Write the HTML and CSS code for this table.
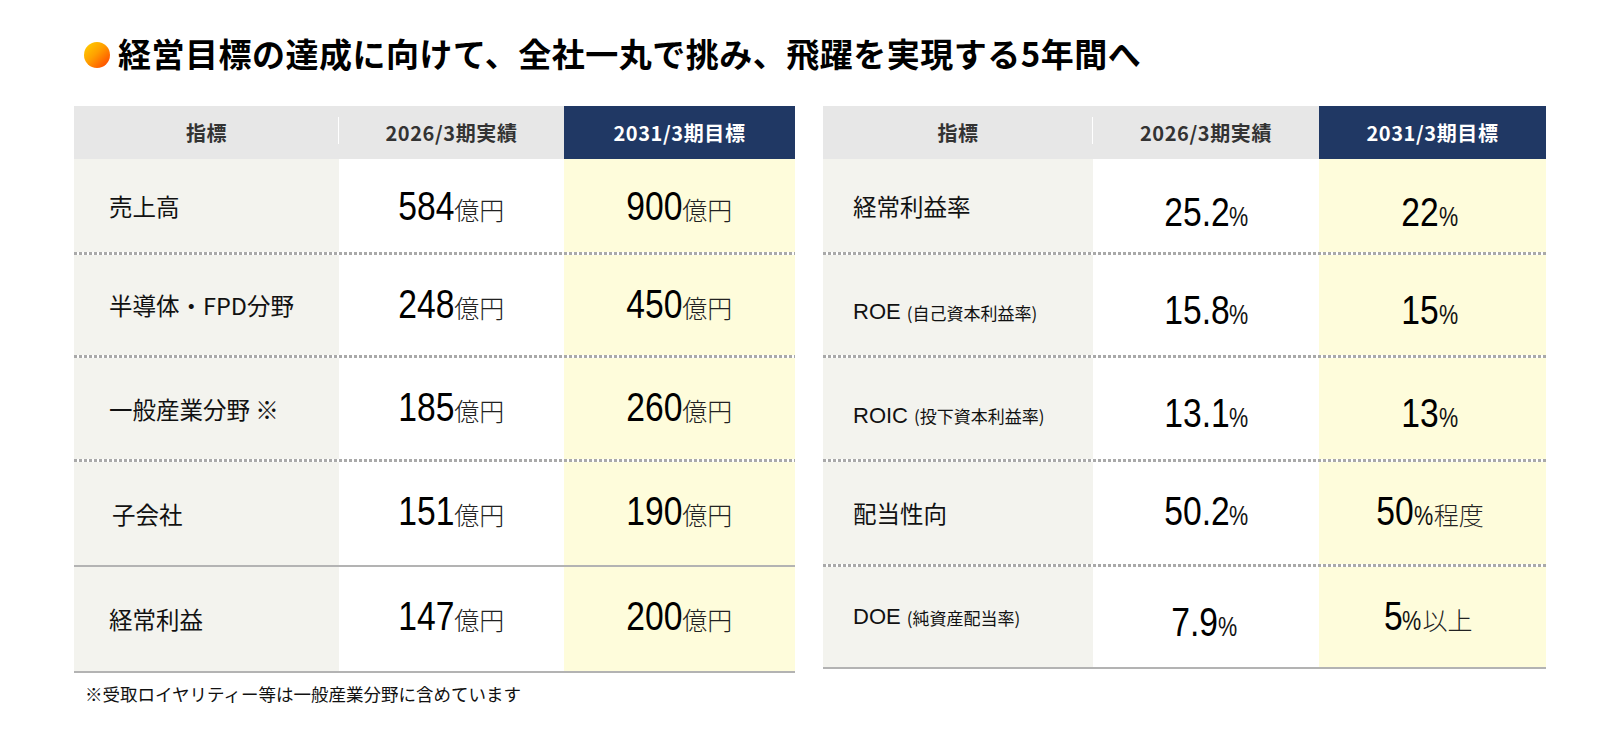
FILE: index.html
```html
<!DOCTYPE html>
<html lang="ja">
<head>
<meta charset="utf-8">
<title>経営目標</title>
<link rel="stylesheet" href="styles.css">
</head>
<body>
<div class="page">
  <h1 class="title"><span class="dot"></span>経営目標の達成に向けて、全社一丸で挑み、飛躍を実現する5年間へ</h1>
  <div class="tables">
    <div class="tbl tbl-left">
      <div class="row head">
        <div class="c h first">指標</div>
        <div class="c h">2026/3期実績</div>
        <div class="c h goal">2031/3期目標</div>
      </div>
      <div class="row dotted">
        <div class="c label">売上高</div>
        <div class="c val"><span class="num">584</span><span class="unit">億円</span></div>
        <div class="c val tgt"><span class="num">900</span><span class="unit">億円</span></div>
      </div>
      <div class="row dotted">
        <div class="c label">半導体・FPD分野</div>
        <div class="c val"><span class="num">248</span><span class="unit">億円</span></div>
        <div class="c val tgt"><span class="num">450</span><span class="unit">億円</span></div>
      </div>
      <div class="row dotted">
        <div class="c label">一般産業分野 ※</div>
        <div class="c val"><span class="num">185</span><span class="unit">億円</span></div>
        <div class="c val tgt"><span class="num">260</span><span class="unit">億円</span></div>
      </div>
      <div class="row solid">
        <div class="c label indent">子会社</div>
        <div class="c val"><span class="num">151</span><span class="unit">億円</span></div>
        <div class="c val tgt"><span class="num">190</span><span class="unit">億円</span></div>
      </div>
      <div class="row solid">
        <div class="c label">経常利益</div>
        <div class="c val"><span class="num">147</span><span class="unit">億円</span></div>
        <div class="c val tgt"><span class="num">200</span><span class="unit">億円</span></div>
      </div>
    </div>

    <div class="tbl tbl-right">
      <div class="row head">
        <div class="c h first">指標</div>
        <div class="c h">2026/3期実績</div>
        <div class="c h goal">2031/3期目標</div>
      </div>
      <div class="row dotted">
        <div class="c label">経常利益率</div>
        <div class="c val low"><span class="num">25.2</span><span class="pct">%</span></div>
        <div class="c val low tgt"><span class="num">22</span><span class="pct">%</span></div>
      </div>
      <div class="row dotted">
        <div class="c label drop"><span class="en">ROE</span><span class="paren">(自己資本利益率)</span></div>
        <div class="c val low"><span class="num">15.8</span><span class="pct">%</span></div>
        <div class="c val low tgt"><span class="num">15</span><span class="pct">%</span></div>
      </div>
      <div class="row dotted">
        <div class="c label drop"><span class="en">ROIC</span><span class="paren">(投下資本利益率)</span></div>
        <div class="c val low"><span class="num">13.1</span><span class="pct">%</span></div>
        <div class="c val low tgt"><span class="num">13</span><span class="pct">%</span></div>
      </div>
      <div class="row dotted">
        <div class="c label">配当性向</div>
        <div class="c val"><span class="num">50.2</span><span class="pct">%</span></div>
        <div class="c val tgt"><span class="num">50</span><span class="pct">%</span><span class="unit">程度</span></div>
      </div>
      <div class="row solid">
        <div class="c label"><span class="en">DOE</span><span class="paren">(純資産配当率)</span></div>
        <div class="c val low"><span class="num">7.9</span><span class="pct">%</span></div>
        <div class="c val tgt"><span class="num">5</span><span class="pct">%</span><span class="unit">以上</span></div>
      </div>
    </div>
  </div>
  <p class="note">※受取ロイヤリティー等は一般産業分野に含めています</p>
</div>
</body>
</html>
```

FILE: styles.css
```css
* { box-sizing: border-box; }

body {
  margin: 0;
  background: #ffffff;
  font-family: "Noto Sans CJK JP", "Noto Sans", sans-serif;
  color: #111111;
}

.page {
  padding: 33px 0 0 74px;
}

.title {
  margin: 0 0 0 10px;
  height: 40px;
  display: flex;
  align-items: center;
  gap: 8px;
  font-size: 33px;
  line-height: 40px;
  font-weight: 700;
  color: #000000;
  letter-spacing: 0.5px;
}

.dot {
  flex: none;
  width: 26px;
  height: 26px;
  margin-top: 4px;
  border-radius: 50%;
  background: linear-gradient(135deg, #ffd400 0%, #ffa000 45%, #ff3a00 100%);
}

.tables {
  display: flex;
  align-items: flex-start;
  gap: 28px;
  margin-top: 33px;
}

.tbl-left { --cols: 265px 225px 231px; }
.tbl-right { --cols: 270px 226px 227px; }

.row {
  display: grid;
  grid-template-columns: var(--cols);
}

.head {
  height: 53px;
}

.c.h {
  position: relative;
  display: flex;
  align-items: center;
  justify-content: center;
  background: #e7e7e7;
  font-size: 20px;
  font-weight: 700;
  letter-spacing: 0.6px;
  color: #333333;
}

.c.h.first::after {
  content: "";
  position: absolute;
  right: 0;
  top: 11px;
  width: 1px;
  height: 27px;
  background: #ffffff;
}

.c.h.goal {
  background: #203864;
  color: #ffffff;
}

.row.dotted {
  padding-bottom: 3px;
  background: repeating-linear-gradient(to right, #a9a9a9 0 3px, #ffffff 3px 5px) left bottom / 100% 3px no-repeat;
}

.row.solid {
  border-bottom: 2px solid #b3b3b3;
}

.row:nth-child(2) { height: 96px; }
.row:nth-child(3) { height: 103px; }
.row:nth-child(4) { height: 104px; }
.row:nth-child(5) { height: 105px; }
.tbl-left .row:nth-child(6) { height: 106px; }
.tbl-right .row:nth-child(6) { height: 102px; }

.c.label {
  display: flex;
  align-items: center;
  padding: 0 0 0 35px;
  background: #f3f3ee;
  font-size: 23.5px;
  color: #111111;
}

.tbl-right .c.label {
  padding: 0 0 0 30px;
}

.tbl-right .c.label.drop {
  padding-top: 14px;
}

.c.label.indent {
  padding-left: 38px;
}

.en {
  font-family: "Liberation Sans", "Noto Sans", sans-serif;
  font-size: 22px;
}

.paren {
  font-size: 17px;
  margin-left: 6px;
}

.c.val {
  display: flex;
  align-items: baseline;
  justify-content: center;
  padding-top: 26px;
  background: #ffffff;
  white-space: nowrap;
}

.row:nth-child(2) .c.val {
  padding-top: 24px;
}

.c.val.low {
  padding-top: 32px;
}

.row:nth-child(2) .c.val.low {
  padding-top: 30px;
}

.c.val.tgt {
  background: #fefcdb;
}

.num {
  display: inline-block;
  margin-left: -13px;
  font-family: "Liberation Sans", sans-serif;
  font-size: 41px;
  line-height: 46px;
  color: #000000;
  transform: scaleX(0.82);
  transform-origin: 100% 50%;
}

.pct {
  display: inline-block;
  margin-right: -4px;
  font-family: "Liberation Sans", sans-serif;
  font-size: 27px;
  color: #111111;
  transform: scaleX(0.8);
  transform-origin: 0 50%;
}

.unit {
  font-size: 25px;
  font-weight: 300;
  color: #222222;
}

.note {
  margin: 9px 0 0 11px;
  font-size: 17.5px;
  line-height: 24px;
  color: #111111;
}
```
